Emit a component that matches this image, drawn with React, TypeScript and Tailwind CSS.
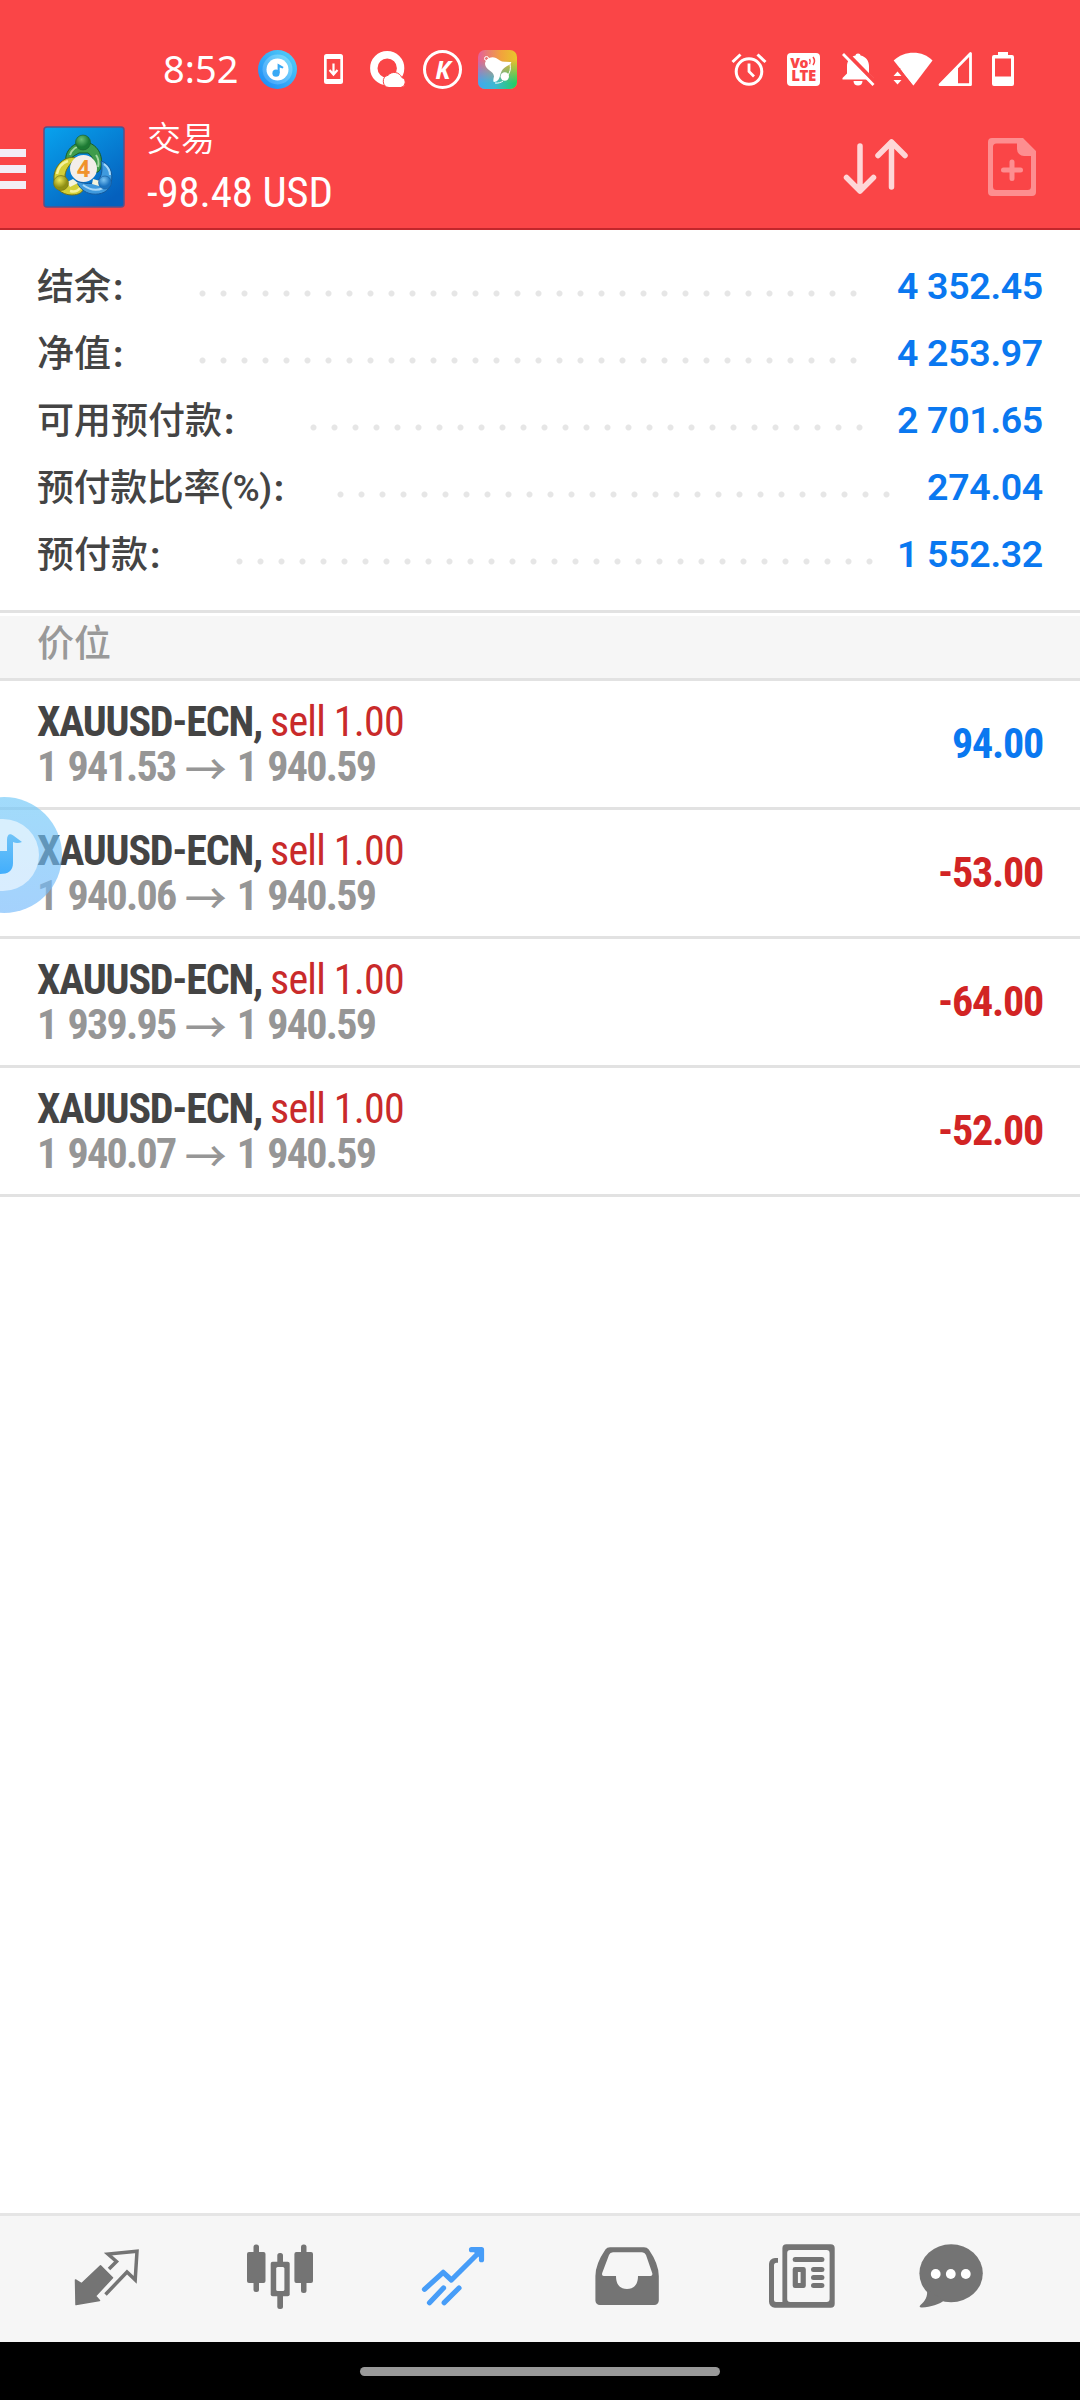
import type { ReactNode } from "react";

const summary = [
    { label: "结余", value: "4 352.45", pad: "w-[155px]", dots: "w-[672px]" },
    { label: "净值", value: "4 253.97", pad: "w-[155px]", dots: "w-[672px]" },
    { label: "可用预付款", value: "2 701.65", pad: "w-[266px]", dots: "w-[567px]" },
    { label: "预付款比率(%)", value: "274.04", pad: "w-[293px] tracking-[-0.4px]", dots: "w-[567px]" },
    { label: "预付款", value: "1 552.32", pad: "w-[192px]", dots: "w-[651px]" },
];

const positions = [
    { open: "1 941.53", current: "1 940.59", profit: "94.00" },
    { open: "1 940.06", current: "1 940.59", profit: "-53.00" },
    { open: "1 939.95", current: "1 940.59", profit: "-64.00" },
    { open: "1 940.07", current: "1 940.59", profit: "-52.00" },
];

function StatusIcons() {
    return (
        <>
            <svg className="ml-[21px]" width="39" height="39" viewBox="0 0 39 39">
                <defs>
                    <linearGradient id="music" x1="0" y1="1" x2="1" y2="0">
                        <stop offset="0" stopColor="#1b86f5" />
                        <stop offset="1" stopColor="#55d3f8" />
                    </linearGradient>
                    <linearGradient id="musicRing" x1="0" y1="1" x2="1" y2="0">
                        <stop offset="0" stopColor="#3f9ffb" />
                        <stop offset="1" stopColor="#7fe0fb" />
                    </linearGradient>
                </defs>
                <circle cx="19.5" cy="19.5" r="19.5" fill="url(#music)" />
                <circle cx="19.5" cy="19.5" r="15" fill="url(#musicRing)" />
                <circle cx="19.5" cy="19.5" r="11" fill="#fff" />
                <circle cx="18" cy="23.2" r="3.6" fill="#38a9f5" />
                <path d="M19.6 23V13.5l6 3.4-1 1.6-2.9-.9V23z" fill="#38a9f5" />
            </svg>
            <svg className="ml-[27px]" width="19" height="30" viewBox="0 0 19 30" fill="none">
                <rect width="19" height="30" rx="2.5" fill="#fff" />
                <rect x="2.7" y="5" width="13.6" height="20" fill="#fa4547" />
                <path d="M9.5 9.5v10M5.5 16l4 4.5 4-4.5" stroke="#fff" strokeWidth="2.2" />
            </svg>
            <svg className="ml-[27px]" width="36" height="36" viewBox="0 0 36 36">
                <circle cx="17.2" cy="17.2" r="13.4" fill="none" stroke="#fff" strokeWidth="7.4" />
                <path
                    d="M19 36.5a6.2 6.2 0 0 1-1-12.2 8.2 8.2 0 0 1 13.8 2.2 5.2 5.2 0 0 1-1 10z"
                    fill="#fff"
                    stroke="#fa4547"
                    strokeWidth="1"
                />
            </svg>
            <span className="ml-[17px] flex size-[39px] items-center justify-center rounded-full border-[3.5px] border-white font-['Open_Sans'] text-[25px] leading-none font-bold italic">
                K
            </span>
            <svg className="ml-4" width="39" height="39" viewBox="0 0 39 39">
                <defs>
                    <linearGradient id="bellTop" x1="0" x2="1">
                        <stop offset="0" stopColor="#e4609a" />
                        <stop offset="0.6" stopColor="#f2a33c" />
                        <stop offset="1" stopColor="#e8c52c" />
                    </linearGradient>
                    <linearGradient id="bellBottom" x1="0" x2="1">
                        <stop offset="0" stopColor="#3fa9ee" />
                        <stop offset="0.45" stopColor="#3db9d0" />
                        <stop offset="1" stopColor="#22cf5c" />
                    </linearGradient>
                    <linearGradient id="bellFade" x1="0" y1="0" x2="0" y2="1">
                        <stop offset="0.25" stopColor="#fff" stopOpacity="0" />
                        <stop offset="0.85" stopColor="#fff" />
                    </linearGradient>
                    <mask id="bellMask">
                        <rect width="39" height="39" fill="url(#bellFade)" />
                    </mask>
                </defs>
                <rect width="39" height="39" rx="7" fill="url(#bellTop)" />
                <rect width="39" height="39" rx="7" fill="url(#bellBottom)" mask="url(#bellMask)" />
                <circle cx="8.5" cy="8.5" r="2" fill="none" stroke="#fff" strokeWidth="1" />
                <path
                    d="M7 14c0-5 6-8.5 11-6 3 1.6 5 4 9 3.8l6 .2c1 1-1 2.5-3 3.5-5 2.5-6.5 5-8 10-.5 3-2.5 6.5-6 6.5-1 0-.8-3 0-5.5C16 21 7.5 20 7 14z"
                    fill="#fff"
                />
                <circle cx="26.8" cy="26.5" r="4.2" fill="#fff" />
                <path d="M32 14c1 5 0 8-2 11M17 33c3 .5 6-.5 8-2" stroke="#fff" strokeWidth="1" fill="none" />
            </svg>
        </>
    );
}

function SystemIcons() {
    return (
        <>
            <svg className="ml-auto" width="36" height="35" viewBox="0 0 36 35" fill="none" stroke="#fff">
                <circle cx="18" cy="19.5" r="12.8" strokeWidth="3" />
                <path d="M18 11.5v8l5 5" strokeWidth="2.8" />
                <path d="M1.5 10l8-7.5M34.5 10l-8-7.5" strokeWidth="3" />
            </svg>
            <span className="ml-5 flex size-[33px] flex-col items-center justify-center rounded-[4px] bg-white font-['Open_Sans'] text-[14px] leading-[13px] font-extrabold tracking-[-0.5px] text-[#fa4547]">
                <span className="flex">
                    Vo
                    <svg width="9" height="11" viewBox="0 0 9 11" fill="none" stroke="#fa4547" strokeWidth="1.5">
                        <path d="M1.5 3q1.5 2.5 0 5M5 1q3 4 0 8" />
                    </svg>
                </span>
                <span className="text-[15px]">LTE</span>
            </span>
            <svg className="ml-[22px]" width="33" height="34" viewBox="0 0 33 34">
                <path
                    d="M16 1.5c1.6 0 2.4.8 2.6 2C24 4.8 27 9 27 14v7.5l4.5 4.5v1.5H.5V26L5 21.5V14c0-5 3.2-9.2 8.5-10.5.2-1.2 1-2 2.5-2z"
                    fill="#fff"
                />
                <path d="M11.5 29h9c0 3-2 4.5-4.5 4.5S11.5 32 11.5 29z" fill="#fff" />
                <path d="M3.5 0L34 31" stroke="#fa4547" strokeWidth="4" />
                <path d="M1 2l30.5 31" stroke="#fff" strokeWidth="2.8" />
            </svg>
            <svg className="ml-[18px]" width="40" height="34" viewBox="0 0 40 34" fill="#fff">
                <path d="M20.5 33.5L.7 8.5C11-2 30-2 39.5 8.5z" />
                <path d="M-1 26V16h9l4 10v8H-1z" fill="#fa4547" />
                <path d="M20.5 33.5L7 16.5l6-3 8 8z" />
                <path d="M.5 24h8l-4-4.5zM.5 28h8l-4 4.5z" />
            </svg>
            <svg className="ml-[5px]" width="35" height="36" viewBox="0 0 35 36">
                <path d="M2 33.7L32.5 2.5v31.2z" fill="none" stroke="#fff" strokeWidth="2.8" strokeLinejoin="round" />
                <path d="M2 34l18-18v18z" fill="#fff" />
            </svg>
            <svg className="ml-[18px]" width="24" height="36" viewBox="0 0 24 36">
                <path d="M7 1h10v3h4a2 2 0 0 1 2 2v27a2 2 0 0 1-2 2H3a2 2 0 0 1-2-2V6a2 2 0 0 1 2-2h4z" fill="#fff" />
                <rect x="4" y="7.5" width="16" height="18" fill="#fa4547" />
            </svg>
        </>
    );
}

function AppLogo() {
    return (
        <svg width="82" height="82" viewBox="0 0 82 82">
            <defs>
                <linearGradient id="logoBg" x1="0" y1="0" x2="0.7" y2="1">
                    <stop offset="0" stopColor="#08a3ee" />
                    <stop offset="1" stopColor="#0560bd" />
                </linearGradient>
                <radialGradient id="green" cx="0.4" cy="0.3">
                    <stop offset="0" stopColor="#6cbf73" />
                    <stop offset="1" stopColor="#1c7a33" />
                </radialGradient>
                <radialGradient id="yellow" cx="0.4" cy="0.3">
                    <stop offset="0" stopColor="#ece85a" />
                    <stop offset="1" stopColor="#8f8f14" />
                </radialGradient>
                <radialGradient id="blue" cx="0.4" cy="0.3">
                    <stop offset="0" stopColor="#7cc4f3" />
                    <stop offset="1" stopColor="#1a72c0" />
                </radialGradient>
            </defs>
            <rect x="1" y="1" width="80" height="80" rx="3" fill="url(#logoBg)" stroke="#5c4f86" strokeWidth="1.5" />
            {/* three people holding on to each other around the badge */}
            <path d="M23 36c-2-11 8-20 18-20s20 10 17 25c-1 5-5 7-8 4 2-6 1-14-5-18h-9c-6 3-9 6-13 9z" fill="#3f9c4b" stroke="#175c2a" />
            <path d="M27 29c2-6 7-9 12-9M53 29c3 4 3 8 2 12" fill="none" stroke="#a6d9a0" strokeWidth="2" />
            <path d="M33 32c-12-3-21 8-22 18-1 11 7 19 18 19 7 0 11-3 12-7l-7-6c-8 2-12-1-12-7 1-7 6-12 11-17z" fill="#d3cf37" stroke="#6f7015" />
            <path d="M14 48c1-6 5-11 11-13M27 65c4 1 8 0 10-3" fill="none" stroke="#f5f29a" strokeWidth="2.5" />
            <path d="M58 35c8 2 13 12 10 22-2 9-10 12-19 11-8-1-13-7-16-13 6 2 14 4 20 1 6-4 7-12 5-21z" fill="#3f9ade" stroke="#155a9c" />
            <path d="M40 59c7 5 14 6 20 3M61 38c4 3 6 7 6 11" fill="none" stroke="#a8d8f8" strokeWidth="2" />
            <path d="M24 56l6-3 5 4-8 4zM57 55l-7-2-1 5 7 2z" fill="#f4f4dc" />
            <circle cx="40" cy="16.5" r="7.5" fill="url(#green)" stroke="#175c2a" strokeWidth="0.6" />
            <circle cx="18" cy="57" r="7.5" fill="url(#yellow)" stroke="#6f7015" strokeWidth="0.6" />
            <circle cx="62" cy="56.5" r="6.5" fill="url(#blue)" stroke="#155a9c" strokeWidth="0.6" />
            <circle cx="40.5" cy="42.5" r="13.5" fill="#f3eeea" />
            <text x="40.5" y="51" textAnchor="middle" className="fill-[#f0922b] font-['Open_Sans'] text-[23px] font-bold">
                4
            </text>
        </svg>
    );
}

function Header() {
    return (
        <header className="h-[230px] border-b-2 border-[#c2272c] bg-[#fa4547] text-white">
            <div className="flex h-[102px] items-center pt-9 pr-[65px] pl-[163px]">
                <span className="mt-[-2px] mr-[-1px] font-['Noto_Sans'] text-[38px] leading-none font-[370]">8:52</span>
                <StatusIcons />
                <SystemIcons />
            </div>
            <div className="flex h-[126px] items-start">
                <div className="mt-[47px] flex w-[26px] flex-col gap-2">
                    <div className="h-2 bg-[#f3edf6]" />
                    <div className="h-2 bg-[#f3edf6]" />
                    <div className="h-2 bg-[#f3edf6]" />
                </div>
                <div className="mt-6 ml-[17px]">
                    <AppLogo />
                </div>
                <div className="mt-[15px] ml-[22px] flex flex-col">
                    <span className="font-['Noto_Sans_CJK_SC',sans-serif] text-[34px] leading-[40px] font-[350]">交易</span>
                    <span className="mt-[10px] font-['Roboto_Condensed'] text-[43px] leading-[50px] font-[450] tracking-[-0.2px]">
                        -98.48 USD
                    </span>
                </div>
                <svg
                    className="mt-9 ml-auto"
                    width="66"
                    height="58"
                    viewBox="0 0 66 58"
                    fill="none"
                    stroke="#fed6d7"
                    strokeWidth="5.5"
                    strokeLinecap="round"
                    strokeLinejoin="round"
                >
                    <path d="M17 8v45M3.5 39.5L17 53l13.5-13.5M48.5 49V4M35 17.5L48.5 4 62 17.5" />
                </svg>
                <svg className="mt-9 mr-[44px] ml-[79px]" width="48" height="58" viewBox="0 0 48 58" fill="#fd8e90">
                    <path
                        fillRule="evenodd"
                        d="M4 0h31l13 13v41a4 4 0 0 1-4 4H4a4 4 0 0 1-4-4V4a4 4 0 0 1 4-4zM8.5 5.5A3.5 3.5 0 0 0 5 9v39.5A3.5 3.5 0 0 0 8.5 52h31a3.5 3.5 0 0 0 3.5-3.5V18h-7a7 7 0 0 1-7-7V5.5z"
                    />
                    <path d="M24 24v16.5M15.5 32h17" stroke="#fd8e90" strokeWidth="5" strokeLinecap="round" />
                </svg>
            </div>
        </header>
    );
}

function Summary() {
    return (
        <section className="flex h-[380px] flex-col px-[37px] pt-[22px]">
            {summary.map((row) => (
                <div key={row.label} className="flex h-[67px] items-center">
                    <span
                        className={`${row.pad} mt-[3px] shrink-0 font-['Roboto','Noto_Sans_CJK_SC',sans-serif] text-[37px] leading-none font-medium whitespace-nowrap text-[#444]`}
                    >
                        {row.label}
                        <span className="pl-[2px] font-bold">:</span>
                    </span>
                    <span
                        className={`${row.dots} mt-4 h-[21px] shrink-0 bg-[radial-gradient(circle,#e6e6e6_2.5px,transparent_3.5px)] bg-[length:21px_21px]`}
                    />
                    <span className="mt-[2px] ml-auto font-['Roboto'] text-[37.5px] leading-none font-semibold tracking-[-0.3px] text-[#0a78f0]">
                        {row.value}
                    </span>
                </div>
            ))}
        </section>
    );
}

function Positions() {
    return (
        <section className="font-['Roboto_Condensed']">
            <div className="border-y-[3px] border-[#e2e2e2] pt-[3px]">
                <h2 className="h-[62px] bg-[#f6f6f6] pl-[37px] font-['Noto_Sans_CJK_SC',sans-serif] text-[37px] leading-[50px] font-[450] text-[#999]">
                    价位
                </h2>
            </div>
            {positions.map((p) => (
                <div
                    key={p.open}
                    className="flex h-[129px] items-center justify-between border-b-[3px] border-[#e2e2e2] px-[37px] text-[42px]"
                >
                    <div className="flex flex-col leading-[45px]">
                        <div className="flex">
                            <span className="font-bold tracking-[-1.2px] text-[#444]">XAUUSD-ECN,</span>
                            <span className="ml-2 font-[450] tracking-[-0.8px] text-[#c92a2a]">sell 1.00</span>
                        </div>
                        <div className="flex font-bold tracking-[-1.7px] text-[#969696] [word-spacing:3px]">
                            <span>{p.open}</span>
                            <span className="mr-2.5 ml-[9px] font-['Noto_Sans_CJK_SC'] leading-[45px] font-medium tracking-normal">
                                →
                            </span>
                            <span>{p.current}</span>
                        </div>
                    </div>
                    <span
                        className={`mb-px font-bold tracking-[-1.2px] ${p.profit.startsWith("-") ? "text-[#d22424]" : "text-[#0a78f0]"}`}
                    >
                        {p.profit}
                    </span>
                </div>
            ))}
        </section>
    );
}

// Music recorder button that floats over the left edge
function FloatingButton() {
    return (
        <svg className="absolute top-[796px] left-0" width="63" height="118" viewBox="0 0 63 118">
            <defs>
                <linearGradient id="bubble" x1="0" y1="0" x2="0" y2="1">
                    <stop offset="0" stopColor="#6fc8f8" />
                    <stop offset="1" stopColor="#74b9fb" />
                </linearGradient>
                <linearGradient id="note" x1="0" y1="0" x2="0" y2="1">
                    <stop offset="0" stopColor="#6fc3f7" />
                    <stop offset="1" stopColor="#42aefc" />
                </linearGradient>
            </defs>
            <circle cx="4" cy="59" r="58" fill="url(#bubble)" fillOpacity="0.65" />
            <circle cx="3" cy="59" r="36" fill="#fff" fillOpacity="0.58" />
            <path d="M0 55h7V44c0-6 3-7 7-4l8 6q-5 2-9 0v21c0 8-5 11-13 11z" fill="url(#note)" />
        </svg>
    );
}

function NavIcon({ children, className }: { children: ReactNode; className: string }) {
    return (
        <div className={`flex justify-center ${className}`}>
            <svg width="80" height="80" viewBox="0 0 80 80" fill="#747474">
                {children}
            </svg>
        </div>
    );
}

function BottomNav() {
    return (
        <nav className="flex h-[129px] border-t-[3px] border-[#e5e5e5] bg-[#f6f6f6] pt-[23px] pl-[21px]">
            <NavIcon className="w-[172px]">
                <path
                    d="M8.5 41l6 3.7 19-18 12 12L28.5 57l4 4.5L9 65.5z"
                    stroke="#747474"
                    strokeWidth="1.5"
                    strokeLinejoin="round"
                />
                <path
                    d="M42 30l7.5-7.5L41 15l29-2.7-1.8 28.5L60 33 38.5 55.5"
                    fill="none"
                    stroke="#747474"
                    strokeWidth="3.5"
                />
            </NavIcon>
            <NavIcon className="w-[173px]">
                <rect x="7" y="13" width="18.5" height="31" rx="2" />
                <rect x="13.5" y="5.5" width="5.5" height="47.5" rx="2.5" />
                <rect x="37.3" y="14" width="5.7" height="56" rx="2.5" />
                <rect x="30.7" y="22.7" width="19" height="34.5" rx="2" />
                <rect x="36.2" y="28" width="8.2" height="24" rx="1.5" fill="#f6f6f6" />
                <rect x="54.4" y="13" width="18.6" height="31" rx="2" />
                <rect x="61" y="5.5" width="5.5" height="48.5" rx="2.5" />
            </NavIcon>
            <NavIcon className="w-[173px]">
                <g fill="none" stroke="#479df8" strokeWidth="5.2" strokeLinecap="round" strokeLinejoin="round">
                    <path d="M11.5 50.3l18.7-17 8.2 7.7L68 11.5M58.5 10.7h10v10M30.5 49l-14 14.7M46 49L31.2 63.7" />
                    <path d="M63 11.5l5 5" />
                </g>
            </NavIcon>
            <NavIcon className="w-[175px]">
                <path
                    fillRule="evenodd"
                    d="M18.4 10.5Q20 8.3 23 8.3h34Q60 8.3 61.8 10.5 71.8 25 71.8 37v24.5a4.5 4.5 0 0 1-4.5 4.5H12.9a4.5 4.5 0 0 1-4.5-4.5V37Q8.4 25 18.4 10.5zM26 13.3q-3 0-4 2.7L15.2 34q-.8 3 1.5 3H29c0 8.5 4 13 11 13s11-4.5 11-13h12.5q2.5 0 1.7-3L59 16q-1.2-2.7-4-2.7z"
                />
            </NavIcon>
            <NavIcon className="w-[175px]">
                <path
                    fillRule="evenodd"
                    d="M24.4 5.3h44.3a4 4 0 0 1 4 4v55.4a4 4 0 0 1-4 4H13a6 6 0 0 1-6-6V25a6 6 0 0 1 6-6h3v4.7h-1.5a2.5 2.5 0 0 0-2.5 2.5V61a2 2 0 0 0 2 2h6.4V9.3a4 4 0 0 1 4-4zM28.2 11a3 3 0 0 0-3 3v46a3 3 0 0 0 3 3h36.4a3 3 0 0 0 3-3V14a3 3 0 0 0-3-3z"
                />
                <rect x="30.7" y="18" width="31.7" height="5" rx="2.5" />
                <path fillRule="evenodd" d="M33 28h8.5q2.3 0 2.3 2.3v16.4q0 2.3-2.3 2.3H33q-2.3 0-2.3-2.3V30.3Q30.7 28 33 28zm2.9 5v11h2.7V33z" />
                <rect x="49" y="28" width="13.4" height="5" rx="2.5" />
                <rect x="49" y="36" width="13.4" height="5" rx="2.5" />
                <rect x="49" y="44" width="13.4" height="5" rx="2.5" />
            </NavIcon>
            <NavIcon className="w-[123px]">
                <ellipse cx="40.1" cy="34.3" rx="31.7" ry="29" />
                <path d="M16 50c1 8-2 12-6.5 16-1.5 1.5-1 2.7 1.5 2.5 9-.5 17-3 22-7z" />
                <circle cx="24.7" cy="35" r="4.9" fill="#fff" />
                <circle cx="39.8" cy="35" r="4.9" fill="#fff" />
                <circle cx="54.8" cy="35" r="4.9" fill="#fff" />
            </NavIcon>
        </nav>
    );
}

export default function App() {
    return (
        <div className="relative flex h-[2400px] w-[1080px] flex-col overflow-hidden bg-white">
            <Header />
            <Summary />
            <Positions />
            <FloatingButton />
            <div className="mt-auto">
                <BottomNav />
                <div className="flex h-[58px] justify-center bg-black pt-[25px]">
                    <div className="h-[9px] w-[360px] rounded-full bg-[#999]" />
                </div>
            </div>
        </div>
    );
}
